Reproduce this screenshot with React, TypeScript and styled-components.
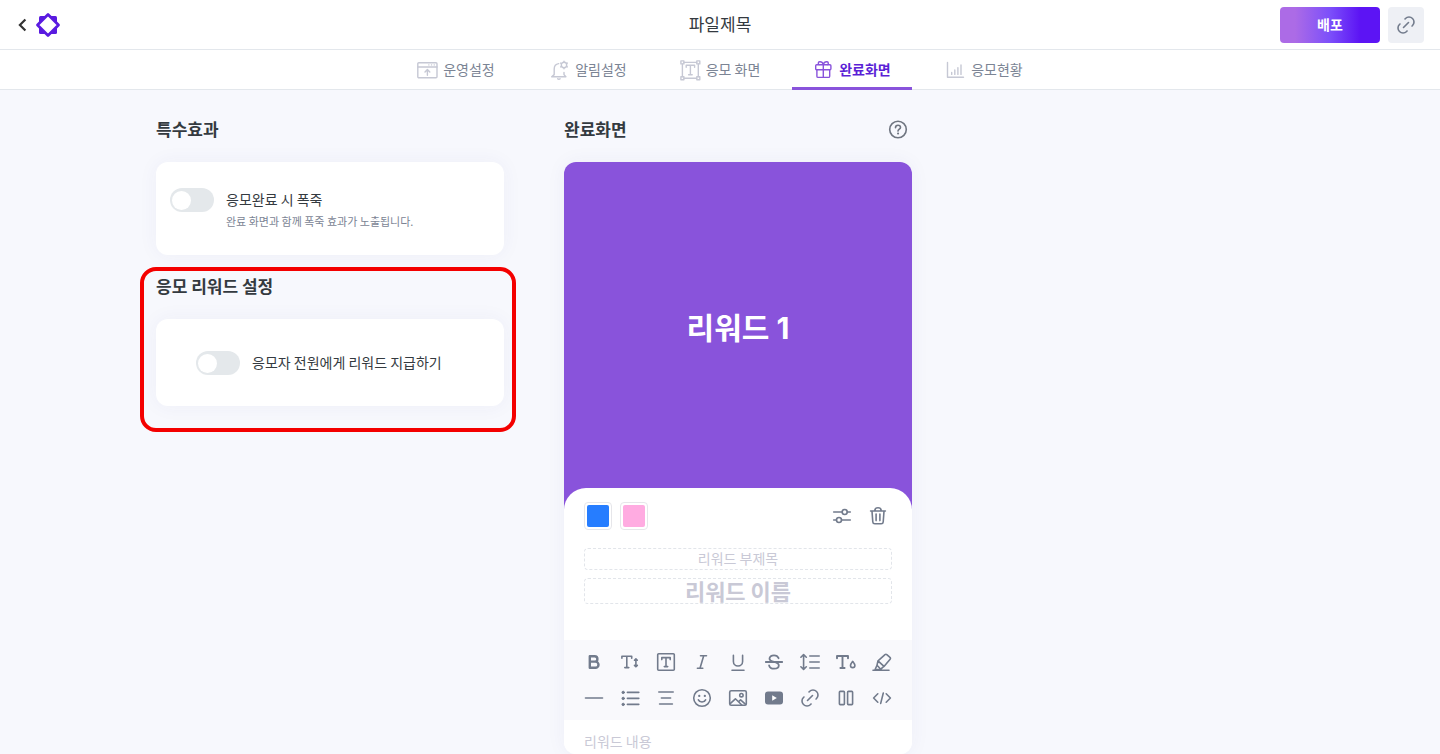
import React, { useState } from "react";
import styled, { createGlobalStyle } from "styled-components";

const color = {
  page: "#f7f8fd",
  line: "#e3e7ec",
  text: "#343a40",
  muted: "#7b8494",
  icon: "#727b8c",
  faint: "#c9c9d6",
  purple: "#8953db",
  deep: "#5b1fd6",
};

const GlobalStyle = createGlobalStyle`
  * { box-sizing: border-box; }
  body {
    margin: 0;
    background: ${color.page};
    color: ${color.text};
    font-family: "Noto Sans CJK KR", "Noto Sans", sans-serif;
    font-size: 14px;
  }
  button, input, textarea { font: inherit; color: inherit; }
  button { border: 0; padding: 0; background: none; cursor: pointer; }
  svg { display: block; flex: none; }
`;

const Header = styled.header`
  display: grid;
  grid-template-columns: 1fr auto 1fr;
  align-items: center;
  height: 50px;
  padding: 0 16px;
  background: #fff;
  border-bottom: 1px solid ${color.line};
`;

const Brand = styled.div`
  display: flex;
  align-items: center;
  gap: 8px;
`;

const IconLink = styled.a`
  display: flex;
  color: #333;
`;

const FileTitle = styled.h1`
  margin: 0;
  padding-bottom: 2px;
  font-size: 17px;
  line-height: 24px;
  font-weight: 400;
`;

const HeaderActions = styled.div`
  display: flex;
  justify-content: flex-end;
  gap: 8px;
`;

const PublishButton = styled.button`
  width: 100px;
  height: 36px;
  padding-bottom: 2px;
  border-radius: 4px;
  background: linear-gradient(90deg, #ac6be6 15%, #7c4ffa 50%, #5c14f4 80%);
  color: #fff;
  font-weight: 700;
`;

const LinkButton = styled.button`
  display: flex;
  align-items: center;
  justify-content: center;
  width: 36px;
  height: 36px;
  border-radius: 4px;
  background: #eef0f5;
  color: ${color.icon};
`;

const TabBar = styled.nav`
  display: flex;
  justify-content: center;
  gap: 12px;
  height: 40px;
  background: #fff;
  border-bottom: 1px solid ${color.line};
`;

const Tab = styled.a<{ $active?: boolean }>`
  display: flex;
  align-items: center;
  justify-content: center;
  gap: 5px;
  width: 120px;
  height: 40px;
  padding-top: 3px;
  border-bottom: 3px solid ${(p) => (p.$active ? color.purple : "transparent")};
  color: ${(p) => (p.$active ? color.deep : color.muted)};
  font-weight: ${(p) => (p.$active ? 700 : 400)};
  line-height: 20px;
  text-decoration: none;
  white-space: nowrap;

  svg {
    color: ${(p) => (p.$active ? color.purple : "#c6c8d4")};
  }
`;

const TabText = styled.span`
  padding-bottom: 2px;
`;

const Main = styled.main`
  display: flex;
  align-items: flex-start;
  gap: 60px;
  max-width: 1128px;
  margin: 0 auto;
  padding-top: 27px;
`;

const Column = styled.div`
  display: flex;
  flex-direction: column;
  gap: 19px;
  width: 348px;
`;

const Section = styled.section`
  position: relative;
`;

const SectionHead = styled.div`
  display: flex;
  align-items: center;
  justify-content: space-between;
  height: 24px;
  margin-bottom: 21px;
  padding-right: 4px;
`;

const SectionTitle = styled.h2`
  margin: 0;
  font-size: 17px;
  line-height: 24px;
  font-weight: 700;
`;

const HelpButton = styled.button`
  color: #6f7580;
`;

const Card = styled.div<{ $pad: string }>`
  display: flex;
  gap: 12px;
  padding: ${(p) => p.$pad};
  border-radius: 12px;
  background: #fff;
  box-shadow: 0 0 20px rgba(60, 60, 130, 0.05);
`;

const Highlight = styled.div`
  position: absolute;
  inset: -7px -12px -26px -16px;
  border: 4px solid #f40000;
  border-radius: 16px;
  pointer-events: none;
`;

const Switch = styled.input`
  flex: none;
  appearance: none;
  display: flex;
  align-items: center;
  width: 44px;
  height: 24px;
  margin: 0;
  padding: 0 2px;
  border-radius: 12px;
  background: #e4e8eb;
  cursor: pointer;

  &::before {
    content: "";
    width: 19px;
    height: 19px;
    border-radius: 50%;
    background: #fff;
  }

  &:checked {
    justify-content: flex-end;
    background: ${color.purple};
  }
`;

const SwitchLabel = styled.label`
  display: block;
  line-height: 22px;
`;

const Hint = styled.p`
  margin: 0;
  color: ${color.muted};
  font-size: 11px;
  line-height: 22px;
`;

const Preview = styled.article`
  border-radius: 12px;
  overflow: hidden;
  background: #fff;
  box-shadow: 0 0 20px rgba(60, 60, 130, 0.05);
`;

const Cover = styled.div`
  display: flex;
  align-items: center;
  justify-content: center;
  aspect-ratio: 1;
  padding-bottom: 20px;
  background: ${color.purple};
  color: #fff;
  font-family: Inter, "Noto Sans CJK KR", sans-serif;
  font-size: 30px;
  font-weight: 700;
`;

const Sheet = styled.div`
  position: relative;
  margin-top: -22px;
  border-radius: 22px 22px 0 0;
  background: #fff;
`;

const SheetTop = styled.div`
  display: flex;
  align-items: center;
  justify-content: space-between;
  padding: 14px 24px 18px 20px;
`;

const Group = styled.div<{ $gap: number }>`
  display: flex;
  gap: ${(p) => p.$gap}px;
`;

const Swatch = styled.button<{ $fill: string }>`
  width: 28px;
  height: 28px;
  padding: 2px;
  border: 1px solid #e6e6ea;
  border-radius: 4px;

  &::before {
    content: "";
    display: block;
    height: 22px;
    border-radius: 2px;
    background: ${(p) => p.$fill};
  }
`;

const IconButton = styled.button`
  display: flex;
  align-items: center;
  justify-content: center;
  width: 20px;
  height: 20px;
  color: ${color.icon};
`;

const Fields = styled.div`
  display: flex;
  flex-direction: column;
  gap: 8px;
  padding: 0 20px 36px;
`;

const Field = styled.input<{ $large?: boolean }>`
  width: 100%;
  height: ${(p) => (p.$large ? 26 : 22)}px;
  padding: 0 0 2px;
  border: 1px dashed #e2e5ea;
  border-radius: 4px;
  background: none;
  font-size: ${(p) => (p.$large ? 22 : 14)}px;
  font-weight: ${(p) => (p.$large ? 700 : 400)};
  line-height: 20px;
  text-align: center;

  &::placeholder {
    color: ${color.faint};
    opacity: 1;
  }
`;

const Tools = styled.div`
  display: grid;
  grid-template-columns: repeat(9, 20px);
  justify-content: space-between;
  row-gap: 16px;
  padding: 12px 20px;
  background: #f9f9fc;
`;

const Body = styled.textarea`
  display: block;
  width: 100%;
  height: 34px;
  padding: 11px 20px 3px;
  border: 0;
  background: none;
  line-height: 20px;
  resize: none;
  overflow: hidden;

  &::placeholder {
    color: ${color.faint};
    opacity: 1;
  }
`;

type IconProps = { children: React.ReactNode; size?: number; width?: number };

const Icon = ({ children, size = 20, width = 1.6 }: IconProps) => (
  <svg
    width={size}
    height={size}
    viewBox={`0 0 ${size} ${size}`}
    fill="none"
    stroke="currentColor"
    strokeWidth={width}
    strokeLinecap="round"
    strokeLinejoin="round"
    aria-hidden="true"
  >
    {children}
  </svg>
);

const chainPaths = (
  <g transform="translate(-2 -2)">
    <path d="M9.500 14.500l5-5" />
    <path d="M11 6l.463-.536a5 5 0 0 1 7.071 7.072L18 13" />
    <path d="M13 18l-.397.534a5.068 5.068 0 0 1-7.127 0 4.972 4.972 0 0 1 0-7.071L6 11" />
  </g>
);

const Logo = () => (
  <svg width="26" height="26" viewBox="0 0 26 26" aria-hidden="true">
    <rect x="4" y="4" width="18" height="18" rx="1.5" fill="#5a1be0" />
    <path
      d="M13 2.500 23.500 13 13 23.500 2.500 13Z"
      fill="#fff"
      stroke="#5a1be0"
      strokeWidth="2.800"
      strokeLinejoin="round"
    />
  </svg>
);

const tabs = [
  {
    name: "운영설정",
    icon: (
      <>
        <rect x="0.8" y="2.700" width="19.200" height="15" rx="1" />
        <path d="M1 7h19M10.400 15.200V9.800M8 12l2.400-2.400 2.400 2.400M11.800 4.900h.1M14.500 4.900h.1M17.200 4.900h.1" />
      </>
    ),
  },
  {
    name: "알림설정",
    icon: (
      <>
        <path d="M9.700 3.600C6.700 4 5.200 6.200 5.200 9v5.600L2.700 16.800h14.200l-1.900-2.200v-2.200M8.700 18.800c.5.600 1.900.6 2.400 0" />
        <circle cx="15" cy="5" r="2.700" />
        <path d="M15 1.200v1M15 7.800v1M18.300 3.100l-.8.5M12.500 6.400l-.8.500M18.300 6.900l-.8-.5M12.500 3.600l-.8-.5" />
      </>
    ),
  },
  {
    name: "응모 화면",
    icon: (
      <>
        <path d="M4 2.400h12.600M4 18.200h12.600M2.400 4v12.600M18.300 4v12.600" />
        <rect x="0.900" y="0.900" width="3" height="3" />
        <rect x="16.800" y="0.900" width="3" height="3" />
        <rect x="0.900" y="16.800" width="3" height="3" />
        <rect x="16.800" y="16.800" width="3" height="3" />
        <path d="M6.200 7.200V5.200h8.400v2M10.400 5.200v9.600M8.600 14.800h3.600" />
      </>
    ),
  },
  {
    name: "완료화면",
    icon: (
      <>
        <rect x="2.700" y="4.800" width="15.200" height="5" rx="1" />
        <path d="M3.900 9.800v6.400c0 .8.300 1.200 1.200 1.200h10.400c.9 0 1.200-.4 1.200-1.200V9.800M10.300 4.800v12.600M10.300 4.600C9.600 2.400 8.200 1.600 6.600 1.800 5 2 4.800 4 6.200 4.600M10.300 4.600C11 2.400 12.400 1.600 14 1.800c1.600.2 1.800 2.200.4 2.800" />
      </>
    ),
    active: true,
  },
  {
    name: "응모현황",
    icon: (
      <path d="M2.500 2.500v14.800h16M6.700 14.400v-2M9.800 14.400V10M12.900 14.400V7.600M16 14.400V5" />
    ),
  },
];

const tools: { name: string; icon: React.ReactNode; width?: number }[] = [
  {
    name: "굵게",
    width: 2.4,
    icon: (
      <path d="M5.800 4.200h4.900a2.700 2.700 0 0 1 0 5.400H5.800ZM5.800 9.600h5.600a3.100 3.100 0 0 1 0 6.200H5.800Z" />
    ),
  },
  {
    name: "글자 크기",
    icon: (
      <path d="M1.900 6.200V4.200h9.800v2M6.800 4.200v11.400M4.800 15.600h4M15.900 7v7.600M14.500 8.200l1.400-1.400 1.400 1.400M14.500 13.400l1.400 1.400 1.400-1.400" />
    ),
  },
  {
    name: "글상자",
    icon: (
      <>
        <rect x="1.700" y="1.700" width="16.600" height="16.600" rx="1" />
        <path d="M5.800 7.600V5.600h8.400v2M10 5.600v9M8.300 14.600h3.400" />
      </>
    ),
  },
  { name: "기울임", icon: <path d="M8.500 3.800h6M5.400 16.200h5.400M11.700 3.800 8 16.200" /> },
  {
    name: "밑줄",
    icon: <path d="M5.400 3.400v6a4.600 4.600 0 0 0 9.200 0v-6M4 18.300h12" />,
  },
  {
    name: "취소선",
    width: 1.8,
    icon: (
      <path d="M14.600 6.200C13.800 4.300 12.200 3.400 10 3.400c-2.600 0-4.500 1.300-4.500 3.300 0 4 9.300 2.300 9.300 6.500 0 2.100-2 3.500-4.700 3.500-2.500 0-4.400-1.200-5-3.300M1.800 10h16.400" />
    ),
  },
  {
    name: "줄 간격",
    icon: (
      <path d="M3.600 2.800v14.400M.9 5.200l2.700-2.700 2.700 2.700M.9 14.800l2.700 2.700 2.700-2.700M9.800 4h9.400M9.800 10h9.400M9.800 16h9.400" />
    ),
  },
  {
    name: "글자 색",
    icon: (
      <>
        <path d="M1 6.200V4h11v2.200M6.500 4v12M4.400 16h4.200" strokeWidth="1.900" />
        <path d="M16.700 9.400c-1.500 2-2.200 2.900-2.200 4a2.200 2.200 0 0 0 4.400 0c0-1.100-.7-2-2.200-4Z" />
      </>
    ),
  },
  {
    name: "형광펜",
    icon: (
      <path d="M1 18.300h16M5 13.200l-2 4.600 5.800-.6 1.600-1.600M6 8.800l-1 4.400M6 8.800l7-6.200c.6-.5 1.200-.5 1.800 0l3.200 2.800c.6.500.6 1.200.1 1.800L12 14.400l-1.600 1.200M6 8.800l6 5.600M5 13.200l3.800 4" />
    ),
  },
  { name: "구분선", icon: <path d="M1.500 10h17" /> },
  {
    name: "목록",
    icon: (
      <>
        <path d="M7.400 4.400h11.400M7.400 10.400h11.400M7.400 16.400h11.400" />
        <g fill="currentColor" strokeWidth="1">
          <circle cx="3.200" cy="4.400" r="1.200" />
          <circle cx="3.200" cy="10.400" r="1.200" />
          <circle cx="3.200" cy="16.400" r="1.200" />
        </g>
      </>
    ),
  },
  { name: "정렬", icon: <path d="M2.800 4h14.400M5.400 10h9.200M3.600 16h12.800" /> },
  {
    name: "이모지",
    icon: (
      <>
        <circle cx="10" cy="10" r="8.300" />
        <path d="M6.400 11.800c1.400 3 5.800 3 7.200 0" />
        <path strokeWidth="2.200" d="M7.200 7.900h.1M12.800 7.900h.1" />
      </>
    ),
  },
  {
    name: "이미지",
    icon: (
      <>
        <rect x="1.700" y="2.700" width="16.600" height="14.600" rx="1.500" />
        <circle cx="13.400" cy="7.200" r="1.700" />
        <path d="M2.200 15.600l5.200-4.800 6.400 6.200M10.600 13.600l2-1.800 5 4.600" />
      </>
    ),
  },
  {
    name: "동영상",
    icon: (
      <g stroke="none">
        <rect x="1" y="3.600" width="18" height="13" rx="3" fill="currentColor" />
        <path d="M8.200 7.300v5.400l4.600-2.700Z" fill="#fff" />
      </g>
    ),
  },
  { name: "링크", icon: chainPaths },
  {
    name: "단 나누기",
    icon: (
      <>
        <rect x="3.400" y="3.400" width="5" height="13.200" rx="0.800" />
        <rect x="11.600" y="3.400" width="5" height="13.200" rx="0.800" />
      </>
    ),
  },
  {
    name: "코드",
    icon: <path d="M5.800 5.800 1.600 10l4.200 4.200M14.200 5.800l4.200 4.200-4.200 4.200M11.300 5l-2.600 10.400" />,
  },
];

export default function App() {
  const [burst, setBurst] = useState(false);
  const [reward, setReward] = useState(false);

  return (
    <>
      <GlobalStyle />
      <Header>
        <Brand>
          <IconLink href="#back" aria-label="뒤로">
            <svg width="11" height="16" viewBox="0 0 11 16" fill="none" aria-hidden="true">
              <path d="M9.400 2.500 3.900 8l5.500 5.500" stroke="currentColor" strokeWidth="2.200" />
            </svg>
          </IconLink>
          <IconLink href="#home" aria-label="홈">
            <Logo />
          </IconLink>
        </Brand>
        <FileTitle>파일제목</FileTitle>
        <HeaderActions>
          <PublishButton type="button">배포</PublishButton>
          <LinkButton type="button" aria-label="링크 복사">
            <Icon>{chainPaths}</Icon>
          </LinkButton>
        </HeaderActions>
      </Header>

      <TabBar>
        {tabs.map((tab) => (
          <Tab key={tab.name} href={`#${tab.name}`} $active={tab.active}>
            <Icon width={1.4} size={21}>
              {tab.icon}
            </Icon>
            <TabText>{tab.name}</TabText>
          </Tab>
        ))}
      </TabBar>

      <Main>
        <Column>
          <Section>
            <SectionHead>
              <SectionTitle>특수효과</SectionTitle>
            </SectionHead>
            <Card $pad="26px 14px 23px">
              <Switch
                id="burst"
                type="checkbox"
                role="switch"
                checked={burst}
                onChange={(e) => setBurst(e.target.checked)}
              />
              <div>
                <SwitchLabel htmlFor="burst">응모완료 시 폭죽</SwitchLabel>
                <Hint>완료 화면과 함께 폭죽 효과가 노출됩니다.</Hint>
              </div>
            </Card>
          </Section>

          <Section>
            <SectionHead>
              <SectionTitle>응모 리워드 설정</SectionTitle>
            </SectionHead>
            <Card $pad="32px 40px 31px">
              <Switch
                id="reward"
                type="checkbox"
                role="switch"
                checked={reward}
                onChange={(e) => setReward(e.target.checked)}
              />
              <SwitchLabel htmlFor="reward">응모자 전원에게 리워드 지급하기</SwitchLabel>
            </Card>
            <Highlight />
          </Section>
        </Column>

        <Column>
          <Section>
            <SectionHead>
              <SectionTitle>완료화면</SectionTitle>
              <HelpButton type="button" aria-label="도움말">
                <Icon>
                  <circle cx="10" cy="10.500" r="8.300" />
                  <path d="M7.500 8.700C7.500 7.100 8.600 6.200 10 6.200s2.500.9 2.500 2.200c0 1.700-2.500 1.900-2.500 3.700" />
                  <path strokeWidth="2" d="M10 14.600h.1" />
                </Icon>
              </HelpButton>
            </SectionHead>
            <Preview>
              <Cover>리워드 1</Cover>
              <Sheet>
                <SheetTop>
                  <Group $gap={8}>
                    <Swatch type="button" $fill="#267dff" aria-label="파랑" />
                    <Swatch type="button" $fill="#ffabe1" aria-label="분홍" />
                  </Group>
                  <Group $gap={16}>
                    <IconButton type="button" aria-label="설정">
                      <Icon>
                        <path d="M1.700 6h8.300M15.400 6h2.900M1.700 14h2.600M9.600 14h8.700" />
                        <circle cx="12.700" cy="6" r="2.500" />
                        <circle cx="7" cy="14" r="2.500" />
                      </Icon>
                    </IconButton>
                    <IconButton type="button" aria-label="삭제">
                      <Icon>
                        <path d="M2.600 5h14.800M6.800 4.800c0-2.200 1.200-3 3.200-3s3.200.8 3.200 3M4 5.200l.8 10.800c.1 1.200.8 1.800 2 1.800h6.400c1.200 0 1.900-.6 2-1.800L16 5.200M8.100 8v6.600M11.900 8v6.600" />
                      </Icon>
                    </IconButton>
                  </Group>
                </SheetTop>
                <Fields>
                  <Field placeholder="리워드 부제목" aria-label="리워드 부제목" />
                  <Field $large placeholder="리워드 이름" aria-label="리워드 이름" />
                </Fields>
                <Tools>
                  {tools.map((tool) => (
                    <IconButton key={tool.name} type="button" aria-label={tool.name}>
                      <Icon width={tool.width}>{tool.icon}</Icon>
                    </IconButton>
                  ))}
                </Tools>
                <Body placeholder="리워드 내용" aria-label="리워드 내용" />
              </Sheet>
            </Preview>
          </Section>
        </Column>
      </Main>
    </>
  );
}
